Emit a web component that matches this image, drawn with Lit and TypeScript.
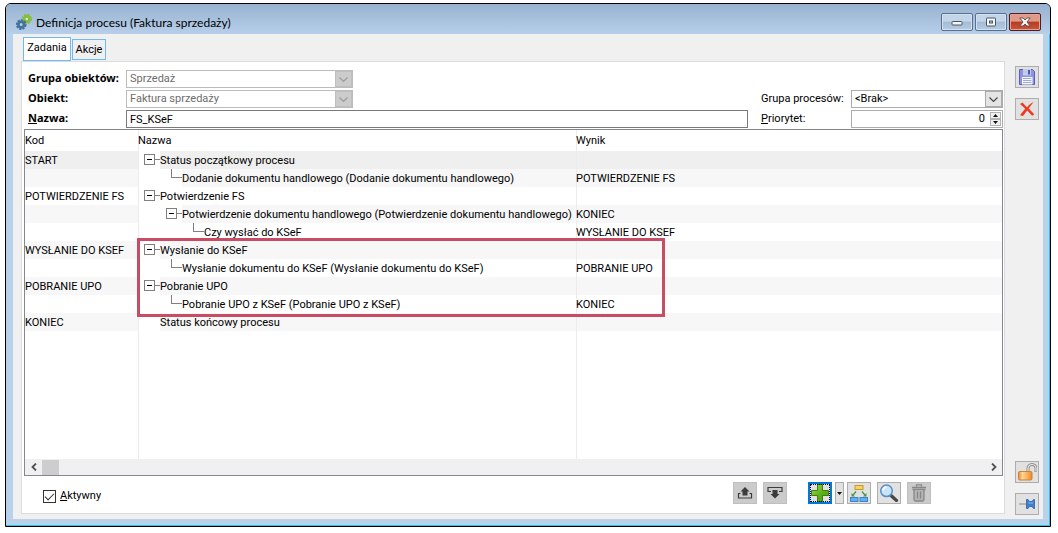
import { LitElement, html, css, svg, nothing } from 'lit';
import { customElement, state } from 'lit/decorators.js';

interface Row {
  code: string;
  name: string;
  result: string;
  level: number;
  open: boolean;
}

const ROWS: Row[] = [
  { code: 'START', name: 'Status początkowy procesu', result: '', level: 0, open: true },
  { code: '', name: 'Dodanie dokumentu handlowego (Dodanie dokumentu handlowego)', result: 'POTWIERDZENIE FS', level: 1, open: false },
  { code: 'POTWIERDZENIE FS', name: 'Potwierdzenie FS', result: '', level: 0, open: true },
  { code: '', name: 'Potwierdzenie dokumentu handlowego (Potwierdzenie dokumentu handlowego)', result: 'KONIEC', level: 1, open: true },
  { code: '', name: 'Czy wysłać do KSeF', result: 'WYSŁANIE DO KSEF', level: 2, open: false },
  { code: 'WYSŁANIE DO KSEF', name: 'Wysłanie do KSeF', result: '', level: 0, open: true },
  { code: '', name: 'Wysłanie dokumentu do KSeF (Wysłanie dokumentu do KSeF)', result: 'POBRANIE UPO', level: 1, open: false },
  { code: 'POBRANIE UPO', name: 'Pobranie UPO', result: '', level: 0, open: true },
  { code: '', name: 'Pobranie UPO z KSeF (Pobranie UPO z KSeF)', result: 'KONIEC', level: 1, open: false },
  { code: 'KONIEC', name: 'Status końcowy procesu', result: '', level: 0, open: false },
];

const gear = (cx: number, cy: number, r: number, fill: string, hole: string) => svg`
  <circle cx=${cx} cy=${cy} r=${r + 0.2} fill="none" stroke=${fill} stroke-width="2" stroke-dasharray="2.2 1.1"/>
  <circle cx=${cx} cy=${cy} r=${r - 1.4} fill=${hole} stroke=${fill} stroke-width="2.6"/>`;

const icons = {
  gears: html`<svg width="16" height="16" viewBox="0 0 16 16" aria-hidden="true">
    ${gear(10.8, 5, 4, '#86bd3c', '#d6e8c4')}${gear(5.2, 10.6, 4.2, '#44729f', '#b4cbe2')}</svg>`,
  min: html`<svg width="12" height="8" viewBox="0 0 12 8" aria-hidden="true"><rect x="1" y="3.5" width="10" height="3.5" rx=".8" fill="#f4f7fa" stroke="#4b5665"/></svg>`,
  max: html`<svg width="12" height="10" viewBox="0 0 12 10" aria-hidden="true"><rect x="1.500" y="1" width="9" height="8" rx=".5" fill="#f4f7fa" stroke="#4b5665"/><rect x="4.500" y="4" width="3" height="2" fill="#b9c9dc" stroke="#4b5665"/></svg>`,
  close: html`<svg width="12" height="10" viewBox="0 0 12 10" aria-hidden="true"><path d="M.8 1h3.400L6 3l1.800-2h3.400L8 5l3.200 4H7.800L6 7 4.200 9H.8L4 5z" fill="#f6f3f3" stroke="#5d4a50" stroke-width=".9"/></svg>`,
  save: html`<svg width="18" height="18" viewBox="0 0 18 18" aria-hidden="true">
    <path d="M1.500 1.500h13l2 2v13h-15z" fill="#8b93e2" stroke="#5a60ac"/>
    <rect x="5" y="1" width="8" height="6.500" fill="#c3cbe8"/><rect x="10" y="2" width="2" height="4.500" fill="#4f57b0"/>
    <rect x="4" y="9" width="10.500" height="7.500" fill="#f6f8ff"/>
    <path d="M5 10.500h8.500M5 12.500h8.500M5 14.500h8.500" stroke="#9fa9d8"/></svg>`,
  del: html`<svg width="16" height="16" viewBox="0 0 16 16" aria-hidden="true">
    <path d="M1 3 3.500 1.500c1.600 1.800 2.700 3.100 4.500 4.700C9.600 4.400 11.300 2.700 14.500 1c-1.700 2.400-3.300 4.100-4.800 6.500 1.600 1.700 3.600 3.500 5.600 5.900l-2.200 1.300C11.300 12.700 9.800 11 8.200 9.500 6.700 11.500 5.400 13.200 4 15L1 14.200C2.700 11.700 4.500 9.900 6.200 7.700 4.500 6 2.700 4.700 1 3z" fill="#ee3a1c"/></svg>`,
  lock: html`<svg width="20" height="18" viewBox="0 0 20 18" aria-hidden="true">
    <defs><linearGradient id="g" x1="0" x2="1"><stop offset="0" stop-color="#f08a28"/><stop offset=".3" stop-color="#ffd79a"/><stop offset="1" stop-color="#f08a1e"/></linearGradient></defs>
    <path d="M11 9V5.500a4 4 0 0 1 8 0V9" fill="none" stroke="#8e8e8e" stroke-width="3"/>
    <path d="M11 8.500V5.500a4 4 0 0 1 8 0V8.500" fill="none" stroke="#e6e6e6" stroke-width="1.200"/>
    <rect x="1.500" y="8.500" width="13.500" height="8.500" rx="1.300" fill="url(#g)" stroke="#c98238"/></svg>`,
  pin: html`<svg width="18" height="14" viewBox="0 0 18 14" aria-hidden="true">
    <path d="M1 7h8" stroke="#9a9a9a" stroke-width="1.200"/>
    <path d="M8.500 2.500H10l1.500 2H14l1.500-2h1v9h-1l-1.500-2h-2.500l-1.500 2H8.500z" fill="#3f7fcb" stroke="#2a62ab" stroke-width=".8"/><path d="M10.500 6h4.500" stroke="#8dbcf0"/></svg>`,
  up: html`<svg width="16" height="14" viewBox="0 0 16 14" aria-hidden="true"><path d="M3.500 7.500h-2v4.500h13V7.500h-2" fill="none" stroke="#3c3c3c" stroke-width="1.200"/><path d="M8 1 12.500 5.500H10.500v4h-5v-4h-2z" fill="#3c3c3c"/></svg>`,
  down: html`<svg width="16" height="14" viewBox="0 0 16 14" aria-hidden="true"><path d="M4 5.500H1V1.500h14v4h-3" fill="none" stroke="#3c3c3c" stroke-width="1.200"/><path d="M8 12.500 3.500 8H5.500V4h5v4h2z" fill="#3c3c3c"/></svg>`,
  plus: html`<svg width="18" height="18" viewBox="0 0 18 18" aria-hidden="true">
    <defs><linearGradient id="p" x2="1" y2="1"><stop offset="0" stop-color="#a6dc50"/><stop offset=".5" stop-color="#62b41c"/><stop offset="1" stop-color="#4a9a10"/></linearGradient></defs>
    <path d="M6.500.5h5v6h6v5h-6v6h-5v-6h-6v-5h6z" fill="url(#p)" stroke="#3d7d12"/></svg>`,
  caret: html`<svg width="5" height="3" viewBox="0 0 5 3" aria-hidden="true"><path d="M0 0h5L2.500 3z" fill="#111"/></svg>`,
  tree: html`<svg width="18" height="18" viewBox="0 0 18 18" aria-hidden="true">
    <rect x="5" y="1.500" width="8" height="4" fill="#f8d45c" stroke="#c29b30"/>
    <path d="M6 7.500 2.700 11.500M12 7.500l3.300 4" stroke="#4c9a3c" stroke-width="1.300"/><path d="M1.500 9v3.500H5zM16.500 9v3.500H13z" fill="#4c9a3c"/>
    <rect x=".5" y="13.500" width="7.500" height="4" fill="#5fb0f2" stroke="#3c84ca"/><rect x="10" y="13.500" width="7.500" height="4" fill="#5fb0f2" stroke="#3c84ca"/></svg>`,
  find: html`<svg width="20" height="18" viewBox="0 0 20 18" aria-hidden="true">
    <path d="m12 11.500 5.500 5" stroke="#474747" stroke-width="3.200" stroke-linecap="round"/>
    <circle cx="7.500" cy="6.800" r="5.800" fill="#c6e4fb" stroke="#5b8ec0" stroke-width="1.500"/><path d="M4 6.500a3.600 3.600 0 0 1 3.500-3.300" fill="none" stroke="#fff" stroke-width="1.600"/></svg>`,
  trash: html`<svg width="16" height="18" viewBox="0 0 16 18" aria-hidden="true">
    <path d="M5.500 2.500v-1.700h5v1.700M1 3.500h14M1.500 5.500h13" fill="none" stroke="#878787" stroke-width="1.300"/>
    <path d="M3 6v9.500q0 1.500 1.500 1.500h7q1.500 0 1.500-1.500V6" fill="#b4b4b4" stroke="#878787" stroke-width="1.300"/><path d="M6.500 7.500v7M9.500 7.500v7" stroke="#878787" stroke-width="1.300"/></svg>`,
  chevron: html`<svg width="9" height="5" viewBox="0 0 9 5" aria-hidden="true"><path d="M.5.5l4 4 4-4" fill="none" stroke="currentColor" stroke-width="1.100"/></svg>`,
};

@customElement('app-root')
export class AppRoot extends LitElement {
  static styles = css`
    :host {
      display: block;
      box-sizing: border-box;
      min-height: 100vh;
      padding: 3px 7px 6px 5px;
      background: #fff;
      color: #000;
      font: 11px/14px Roboto, 'Noto Sans', sans-serif;
    }
    *, *::before, *::after { box-sizing: border-box; }
    button, input, select { font: inherit; color: inherit; margin: 0; padding: 0; border-radius: 0; }
    svg { display: block; flex: none; }
    u { text-underline-offset: 1px; }
    .window {
      display: flex;
      flex-direction: column;
      min-height: calc(100vh - 9px);
      border: 1px solid #000;
      border-radius: 6px 6px 0 0;
      background: #b9d1ea;
      box-shadow: inset -1px -1px #2bc4e4;
      padding: 0 7px 7px 7px;
    }
    .titlebar {
      display: flex;
      align-items: center;
      height: 30px;
      margin: 0 -7px;
      padding: 0 9px 0 10px;
      border-radius: 5px 5px 0 0;
      background: linear-gradient(#97b2d0, #b7cfe9);
    }
    .title { flex: 1; margin: 0 0 0 4px; padding-top: 7px; font: 12px/16px Lato, 'Open Sans', sans-serif; }
    .app-icon { padding-top: 5px; }
    .winbtns { display: flex; gap: 2px; padding-top: 6px; }
    .winbtn {
      display: grid;
      place-items: center;
      width: 32px;
      height: 18px;
      border: 1px solid #5a6f8c;
      border-radius: 2px;
      background: linear-gradient(#c3d5e9 45%, #a3bbd5 50%, #b6cce5);
      box-shadow: inset 0 0 0 1px #d3e1f0;
    }
    .winbtn.x {
      border-color: #551a20;
      background: linear-gradient(#dd9a88 45%, #b83a22 50%, #c9573a);
      box-shadow: inset 0 0 0 1px #e2a596;
    }
    .client { flex: 1; display: flex; background: #f0f0f0; padding: 3px 4px 5px 8px; }
    .main { flex: 1; min-width: 0; display: flex; flex-direction: column; }
    .tabs { display: flex; align-items: flex-end; gap: 1px; height: 24px; padding-left: 2px; }
    .tab {
      width: 34px;
      height: 21px;
      margin-bottom: 1px;
      border: 1px solid #6fbaf3;
      background: #f0f0f0;
    }
    .tab.on { width: 48px; height: 24px; margin: 0; padding-bottom: 3px; background: #fff; }
    .panel {
      flex: 1;
      display: flex;
      flex-direction: column;
      border: 1px solid #dcdcdc;
      background: #fff;
      padding: 8px 1px 0 2px;
    }
    .form {
      display: grid;
      grid-template-columns: 98px 227px 1fr 13px 90px 152px;
      grid-auto-rows: 18px;
      row-gap: 2px;
      align-items: center;
      padding-left: 4px;
    }
    .form label { white-space: nowrap; }
    .strong { grid-column: 1; font: bold 11px/14px 'Noto Sans', sans-serif; padding-bottom: 2px; }
    .wide { grid-column: 2 / 4; }
    .side { grid-column: 5; }
    .field { height: 18px; width: 100%; border: 1px solid #7a7a7a; background: #fff; padding: 0 3px; outline: none; }
    .combo { display: flex; height: 18px; border: 1px solid #acacac; background: #fff; }
    .combo select { flex: 1; min-width: 0; border: 0; padding: 0 3px; background: none; appearance: none; outline: none; opacity: 1; }
    .combo .arrow { display: grid; place-items: center; width: 17px; border: 1px solid #acacac; background: #e4e4e4; color: #444; }
    .combo.off { color: #6d6d6d; border-color: #bcbcbc; }
    .combo.off .arrow { background: #ccc; border-color: #bfbfbf; color: #9a9a9a; }
    .combo .arrow { pointer-events: none; }
    .spin { display: flex; height: 18px; border: 1px solid #acacac; padding: 1px; }
    .spin input { flex: 1; min-width: 0; border: 0; padding: 0 5px 0 0; text-align: right; appearance: textfield; outline: none; }
    .spin input::-webkit-inner-spin-button { display: none; }
    .steps { display: flex; flex-direction: column; width: 11px; }
    .steps button { flex: 1; display: grid; place-items: center; border: 1px solid #b4b4b4; background: #f0f0f0; }
    .steps button:first-child svg { transform: rotate(180deg); }
    .grid {
      flex: 1;
      position: relative;
      display: flex;
      flex-direction: column;
      margin-top: 1px;
      border: 1px solid #828790;
    }
    .sheet { flex: 1; display: grid; }
    table { width: 100%; height: 100%; border-collapse: collapse; table-layout: fixed; }
    .c1 { width: 113px; }
    .c2 { width: 438px; }
    th, td { padding: 0; text-align: left; font-weight: normal; white-space: nowrap; vertical-align: middle; }
    th + th, td + td { box-shadow: inset 1px 0 #ececec; }
    th { height: 21px; }
    .row { height: 18px; }
    .row td { height: 18px; padding-top: 1px; line-height: 17px; }
    .row .name { padding: 0; }
    .alt td, .alt .text { background: #f7f7f7; }
    .sel td, .sel .text { background: #efefef; }
    .row .name { background: #fff; }
    .node { display: flex; align-items: center; height: 18px; padding-left: 6px; }
    .node.l1 { padding-left: 28px; }
    .node.l2 { padding-left: 50px; }
    .text { flex: 1; height: 18px; padding-top: 1px; line-height: 17px; }
    .mark { display: flex; align-items: center; width: 16px; height: 18px; }
    .toggle { display: grid; place-items: center; width: 11px; height: 11px; border: 1px solid #808080; background: #fff; }
    .toggle::before { content: ''; width: 5px; height: 1px; background: #000; }
    .mark.leaf { align-items: flex-start; padding-left: 5px; }
    .mark.leaf::before { content: ''; flex: 1; height: 9px; border: solid #808080; border-width: 0 0 1px 1px; }
    .mark.exp { padding-bottom: 1px; }
    .mark.exp::after { content: ''; flex: 1; height: 1px; background: #808080; }
    .highlight {
      position: absolute;
      left: 112px;
      top: 108px;
      width: 528px;
      height: 79px;
      border: 3px solid #c84c64;
      pointer-events: none;
    }
    .scroll { display: flex; align-items: center; height: 16px; background: #f0f0f0; color: #505050; }
    .scroll button { display: grid; place-items: center; width: 17px; height: 16px; border: 0; background: none; }
    .track { flex: 1; height: 15px; }
    .thumb { width: 17px; height: 15px; background: #cdcdcd; }
    .bottom { display: flex; align-items: flex-start; height: 37px; padding: 6px 72px 0 19px; }
    .check { flex: 1; display: flex; align-items: center; gap: 4px; padding-top: 7px; }
    .check input { appearance: none; width: 13px; height: 13px; border: 1px solid #333; display: grid; place-items: center; }
    .check input:checked::before {
      content: '';
      width: 9px;
      height: 5px;
      margin-top: -2px;
      border: solid #333;
      border-width: 0 0 1px 1px;
      transform: rotate(-45deg);
    }
    .tools { display: flex; gap: 6px; }
    .add { display: flex; gap: 3px; margin-left: 15px; }
    .add + .btn { margin-left: -3px; }
    .btn {
      display: grid;
      place-items: center;
      width: 24px;
      height: 22px;
      border: 1px solid #adadad;
      background: #e1e1e1;
      overflow: hidden;
    }
    .btn:disabled { background: #cbcbcb; border-color: #bfbfbf; }
    .btn.primary { border: 2px solid #0078d7; outline: 1px dotted #000; outline-offset: -3px; }
    .btn.thin { width: 9px; }
    .rail { display: flex; flex-direction: column; gap: 10px; padding: 29px 0 0 10px; margin-bottom: -1px; }
    .gap { flex: 1; }
    .rail .btn { flex: none; }
  `;

  @state() private active = true;

  private mark(r: Row) {
    if (r.open) return html`<span class="mark exp"><button class="toggle" aria-label="Zwiń"></button></span>`;
    return html`<span class="mark ${r.level ? 'leaf' : ''}"></span>`;
  }

  private row(r: Row, i: number) {
    const tone = i === 0 ? 'sel' : i % 2 ? 'alt' : '';
    return html`<tr class="row ${tone}">
      <td>${r.code}</td>
      <td class="name"><div class="node l${r.level}">${this.mark(r)}<span class="text">${r.name}</span></div></td>
      <td>${r.result || nothing}</td>
    </tr>`;
  }

  render() {
    return html`
      <div class="window">
        <header class="titlebar">
          <span class="app-icon">${icons.gears}</span>
          <h1 class="title">Definicja procesu (Faktura sprzedaży)</h1>
          <div class="winbtns">
            <button class="winbtn" aria-label="Minimalizuj">${icons.min}</button>
            <button class="winbtn" aria-label="Maksymalizuj">${icons.max}</button>
            <button class="winbtn x" aria-label="Zamknij">${icons.close}</button>
          </div>
        </header>
        <div class="client">
          <main class="main">
            <div class="tabs" role="tablist">
              <button class="tab on" role="tab" aria-selected="true">Zadania</button>
              <button class="tab" role="tab" aria-selected="false">Akcje</button>
            </div>
            <section class="panel">
              <div class="form">
                <label class="strong" for="group">Grupa obiektów:</label>
                <span class="combo off"><select id="group" disabled><option>Sprzedaż</option></select><span class="arrow">${icons.chevron}</span></span>
                <label class="strong" for="object">Obiekt:</label>
                <span class="combo off"><select id="object" disabled><option>Faktura sprzedaży</option></select><span class="arrow">${icons.chevron}</span></span>
                <label class="side" for="procs">Grupa procesów:</label>
                <span class="combo"><select id="procs"><option>&lt;Brak&gt;</option></select><span class="arrow">${icons.chevron}</span></span>
                <label class="strong" for="name"><u>N</u>azwa:</label>
                <input class="field wide" id="name" type="text" value="FS_KSeF" />
                <label class="side" for="prio"><u>P</u>riorytet:</label>
                <span class="spin">
                  <input id="prio" type="number" value="0" />
                  <span class="steps">
                    <button aria-label="Więcej">${icons.caret}</button>
                    <button aria-label="Mniej">${icons.caret}</button>
                  </span>
                </span>
              </div>
              <div class="grid">
                <div class="sheet">
                  <table>
                    <colgroup><col class="c1" /><col class="c2" /><col /></colgroup>
                    <thead><tr><th>Kod</th><th>Nazwa</th><th>Wynik</th></tr></thead>
                    <tbody>
                      ${ROWS.map((r, i) => this.row(r, i))}
                      <tr><td></td><td></td><td></td></tr>
                    </tbody>
                  </table>
                </div>
                <div class="scroll">
                  <button aria-label="W lewo"><svg width="6" height="8" viewBox="0 0 6 8"><path d="M5 .5 1.500 4 5 7.500" fill="none" stroke="currentColor" stroke-width="1.800"/></svg></button>
                  <div class="track"><div class="thumb"></div></div>
                  <button aria-label="W prawo"><svg width="6" height="8" viewBox="0 0 6 8"><path d="M1 .5 4.500 4 1 7.500" fill="none" stroke="currentColor" stroke-width="1.800"/></svg></button>
                </div>
                <div class="highlight"></div>
              </div>
              <div class="bottom">
                <label class="check">
                  <input type="checkbox" .checked=${this.active} @change=${() => (this.active = !this.active)} />
                  <span><u>A</u>ktywny</span>
                </label>
                <div class="tools">
                  <button class="btn" disabled aria-label="W górę">${icons.up}</button>
                  <button class="btn" disabled aria-label="W dół">${icons.down}</button>
                  <span class="add">
                    <button class="btn primary" aria-label="Dodaj">${icons.plus}</button>
                    <button class="btn thin" aria-label="Więcej opcji">${icons.caret}</button>
                  </span>
                  <button class="btn" aria-label="Struktura">${icons.tree}</button>
                  <button class="btn" aria-label="Szukaj">${icons.find}</button>
                  <button class="btn" disabled aria-label="Usuń">${icons.trash}</button>
                </div>
              </div>
            </section>
          </main>
          <aside class="rail">
            <button class="btn" aria-label="Zapisz">${icons.save}</button>
            <button class="btn" aria-label="Anuluj">${icons.del}</button>
            <span class="gap"></span>
            <button class="btn" aria-label="Odblokuj">${icons.lock}</button>
            <button class="btn" aria-label="Przypnij">${icons.pin}</button>
          </aside>
        </div>
      </div>
    `;
  }
}
